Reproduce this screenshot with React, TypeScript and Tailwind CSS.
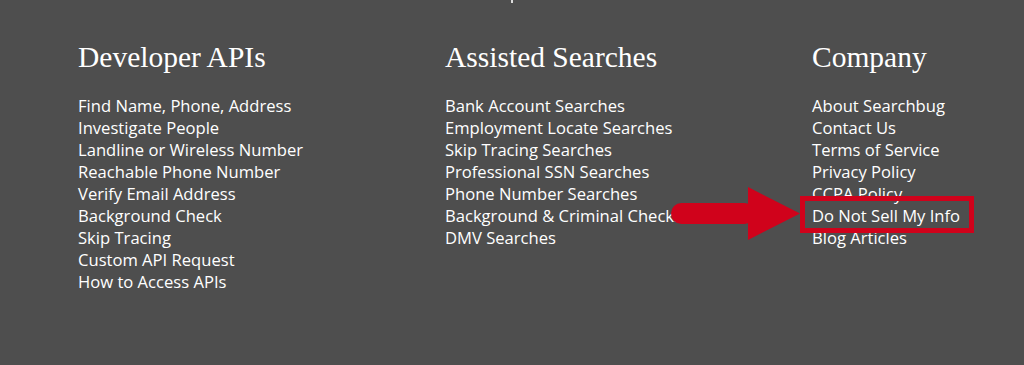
const columns = [
  {
    title: 'Developer APIs',
    links: [
      'Find Name, Phone, Address',
      'Investigate People',
      'Landline or Wireless Number',
      'Reachable Phone Number',
      'Verify Email Address',
      'Background Check',
      'Skip Tracing',
      'Custom API Request',
      'How to Access APIs',
    ],
  },
  {
    title: 'Assisted Searches',
    links: [
      'Bank Account Searches',
      'Employment Locate Searches',
      'Skip Tracing Searches',
      'Professional SSN Searches',
      'Phone Number Searches',
      'Background & Criminal Checks',
      'DMV Searches',
    ],
  },
  {
    title: 'Company',
    links: [
      'About Searchbug',
      'Contact Us',
      'Terms of Service',
      'Privacy Policy',
      'CCPA Policy',
      'Do Not Sell My Info',
      'Blog Articles',
    ],
  },
];

export default function App() {
  return (
    <div className="relative w-[1024px] h-[365px] overflow-hidden bg-[#4e4e4e] text-white">
      {/* descender from the line cut off above */}
      <div className="absolute left-[511px] top-0 w-[2px] h-[3px] bg-white/80" />

      <div className="flex pl-[78px] pt-[43px]">
        {columns.map((col) => (
          <div key={col.title} className="w-[367px] shrink-0">
            <h3 className="font-['Liberation_Serif',serif] text-[29.5px] leading-[28px] whitespace-nowrap">
              {col.title}
            </h3>
            <ul className="mt-[24px] font-['Open_Sans',sans-serif] text-[16.6px] leading-[22px]">
              {col.links.map((l) => (
                <li key={l} className="whitespace-nowrap">
                  <a href="#">{l}</a>
                </li>
              ))}
            </ul>
          </div>
        ))}
      </div>

      {/* highlight box */}
      <div className="absolute left-[800px] top-[196px] w-[174px] h-[37px] border-[5px] border-[#d0021b]" />

      {/* arrow */}
      <svg className="absolute left-[671px] top-[187px]" width="130" height="54" viewBox="0 0 130 54">
        <rect x="0" y="16" width="84" height="21" rx="10.5" fill="#d0021b" />
        <polygon points="77,0 129,26.5 77,53" fill="#d0021b" />
      </svg>
    </div>
  );
}
